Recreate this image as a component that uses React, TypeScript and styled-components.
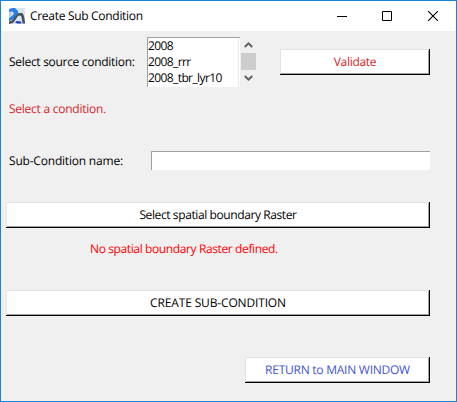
import React from "react";
import styled, { createGlobalStyle } from "styled-components";

const GlobalStyle = createGlobalStyle`
  *, *::before, *::after { box-sizing: border-box; }
  body { margin: 0; overflow: hidden; }
`;

const Window = styled.div`
  width: 457px;
  height: 402px;
  display: flex;
  flex-direction: column;
  border: 1px solid #1883d7;
  background: #f0f0f0;
  color: #000;
  font-family: "Open Sans", "Noto Sans", sans-serif;
  font-size: 12px;
  line-height: 16px;
  text-rendering: geometricPrecision;
`;

const TitleBar = styled.header`
  height: 30px;
  flex: none;
  display: flex;
  align-items: center;
  padding-left: 8px;
  background: #fff;
`;

const Text = styled.span<{ $color?: string; $spacing?: number }>`
  color: ${(p) => p.$color ?? "#000"};
  letter-spacing: ${(p) => p.$spacing ?? -0.3}px;
  white-space: nowrap;
`;

const Title = styled(Text)`
  flex: 1;
  margin-left: 5px;
`;

const Controls = styled.div`
  display: flex;
  gap: 35px;
  padding-right: 18px;
  svg { display: block; }
  svg:last-child { margin-left: 1px; }
`;

const Form = styled.main`
  flex: 1;
  display: flex;
  flex-direction: column;
  padding: 6px 26px 0 5px;
`;

const Row = styled.div<{ $height: number; $top?: number; $indent?: number }>`
  display: flex;
  flex: none;
  align-items: center;
  height: ${(p) => p.$height}px;
  margin-top: ${(p) => p.$top ?? 0}px;
  padding-left: ${(p) => p.$indent ?? 0}px;
`;

const Label = styled.label<{ $width: number }>`
  width: ${(p) => p.$width}px;
  flex: none;
  line-height: 16px;
`;

const ListBox = styled.ul`
  width: 93px;
  height: 50px;
  margin: 0;
  padding: 0;
  list-style: none;
  background: #fff;
  border-top: 1px solid #a0a0a0;
  border-left: 1px solid #a0a0a0;
  box-shadow: inset -1px 0 #fff, inset -2px 0 #e9e9e9;
`;

const Item = styled.li`
  height: 16px;
  line-height: 15px;
`;

const ScrollBar = styled.div`
  width: 17px;
  height: 50px;
  padding: 0 1px;
  display: flex;
  flex-direction: column;
  align-items: center;
  svg { display: block; margin: 5px 0 5px; }
`;

const Thumb = styled.div`
  width: 15px;
  height: 17px;
  flex: none;
  background: #cdcdcd;
`;

const Button = styled.button<{ $width: number; $color?: string; $spacing?: number }>`
  width: ${(p) => p.$width}px;
  height: 26px;
  margin: 0 0 0 auto;
  padding: 0;
  border: 0;
  background: #fff;
  box-shadow: inset -1px -1px #000, inset 1px 1px #e3e3e3, inset -2px -2px #a0a0a0;
  color: ${(p) => p.$color ?? "#000"};
  font: inherit;
  text-rendering: inherit;
  letter-spacing: ${(p) => p.$spacing ?? -0.3}px;
  white-space: nowrap;
`;

const Input = styled.input`
  width: 279px;
  height: 19px;
  margin-left: auto;
  padding: 0 2px;
  border: 0;
  outline: 0;
  background: #fff;
  box-shadow: inset 1px 1px #a0a0a0;
  font: inherit;
`;

const AppIcon = () => (
  <svg width="16" height="16" viewBox="0 0 16 16">
    <rect width="16" height="16" fill="#dce2ee" />
    <path d="M0 1.500L3 0h3l3 3v3l-3 4-3 2-3 1v-3l4-3 1-2-2-1.500L0 4z" fill="#2780e3" />
    <path d="M0 4l3 1.500L1.500 8 0 9z" fill="#a9cbf0" />
    <path d="M0 16v-2.500l3-1 4-5L9.500 5h4L15 8l1 6v1.500h-2.500L12.500 9l-1-1.500L9 8l-3 4.500L4 15z" fill="#4f5158" />
    <path d="M6 14l2-1 4 .5.5 2H8z" fill="#1b3dc4" />
  </svg>
);

const Chevron = ({ down = false }: { down?: boolean }) => (
  <svg width="9" height="6" viewBox="0 0 9 6">
    <path d={down ? "M.8 1l3.700 3.600L8.200 1" : "M.8 5l3.700-3.600L8.200 5"} fill="none" stroke="#606060" strokeWidth="2" />
  </svg>
);

export default function App() {
  return (
    <>
      <GlobalStyle />
      <Window>
        <TitleBar>
          <AppIcon />
          <Title>Create Sub Condition</Title>
          <Controls>
            <svg width="10" height="10" viewBox="0 0 10 10"><path d="M0 5.500h10" stroke="#000" /></svg>
            <svg width="10" height="10" viewBox="0 0 10 10"><path d="M.5.5h9v9h-9z" fill="none" stroke="#000" /></svg>
            <svg width="10" height="10" viewBox="0 0 10 10"><path d="M0 0l10 10M10 0L0 10" stroke="#000" strokeWidth="1.100" /></svg>
          </Controls>
        </TitleBar>
        <Form>
          <Row $height={50} $indent={3}>
            <Label $width={138}><Text>Select source condition:</Text></Label>
            <ListBox>
              <Item><Text $spacing={-0.6}>2008</Text></Item>
              <Item><Text $spacing={-0.6}>2008_rrr</Text></Item>
              <Item><Text $spacing={-0.6}>2008_tbr_lyr10</Text></Item>
            </ListBox>
            <ScrollBar>
              <Chevron />
              <Thumb />
              <Chevron down />
            </ScrollBar>
            <Button $width={150} $color="#d81e2c">Validate</Button>
          </Row>
          <Row $height={16} $top={14} $indent={3}>
            <Text $color="#d81e2c" $spacing={-0.25}>Select a condition.</Text>
          </Row>
          <Row $height={19} $top={34} $indent={3}>
            <Label $width={138}><Text $spacing={-0.2}>Sub-Condition name:</Text></Label>
            <Input aria-label="Sub-Condition name" />
          </Row>
          <Row $height={26} $top={32}>
            <Button $width={424} $spacing={-0.4}>Select spatial boundary Raster</Button>
          </Row>
          <Row $height={16} $top={13} $indent={84}>
            <Text $color="#ff0000" $spacing={-0.38}>No spatial boundary Raster defined.</Text>
          </Row>
          <Row $height={26} $top={33}>
            <Button $width={424} $spacing={-0.15}>CREATE SUB-CONDITION</Button>
          </Row>
          <Row $height={26} $top={41}>
            <Button $width={185} $color="#3f56cf" $spacing={-0.25}>RETURN to MAIN WINDOW</Button>
          </Row>
        </Form>
      </Window>
    </>
  );
}
